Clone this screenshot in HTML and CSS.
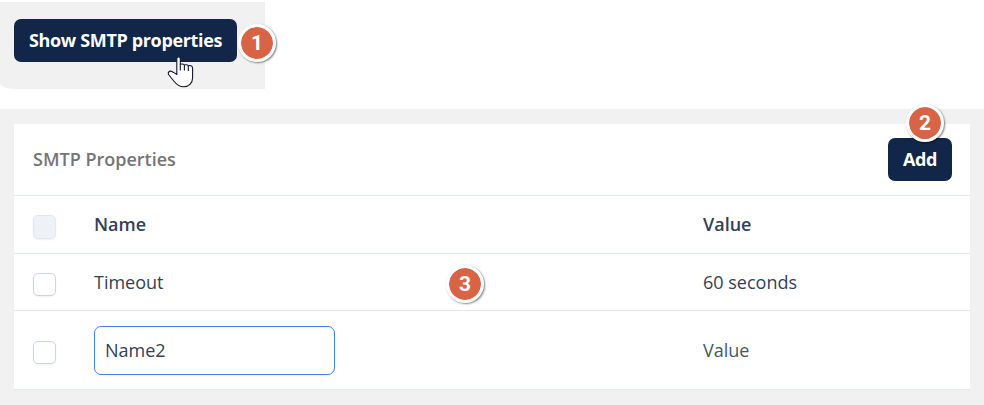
FILE: index.html
```html
<!DOCTYPE html>
<html lang="en">
<head>
    <meta charset="UTF-8">
    <meta name="viewport" content="width=device-width, initial-scale=1.0">
    <title>SMTP Properties</title>
    <link rel="stylesheet" href="styles.css">
</head>
<body>
    <div class="toolbar">
        <button class="btn btn-show" type="button">Show SMTP properties</button>
        <span class="step step-1">1</span>
        <svg class="cursor" width="27" height="34" viewBox="0 0 27 34">
            <path d="M9.8 19.5V3.5C9.8 1.3 13.3 1.3 13.3 3.5V9.5C13.9 8.8 16.9 8.8 17.4 10.2C18 9.4 20.9 9.6 21.3 11C22.5 10.2 25.6 10.4 25.6 13.2V23C25.6 28 21.6 31.8 16.5 31.8C12 31.8 9.2 29 6.8 26L1.5 19.5C.5 17.2 2.6 15.4 4.8 16.5C6.8 17.6 8.4 18.4 9.8 19.5Z" fill="#fff" stroke="#10152c" stroke-width="1.1" stroke-linejoin="round"/>
            <path d="M13.3 9.5V15.5M17.4 10.2V15.5M21.3 11V16" fill="none" stroke="#10152c" stroke-width="1.1"/>
        </svg>
    </div>

    <div class="content">
        <div class="card">
            <div class="card-header">
                <h2>SMTP Properties</h2>
                <div class="add">
                    <button class="btn btn-add" type="button">Add</button>
                    <span class="step step-2">2</span>
                </div>
            </div>
            <div class="row row-head">
                <span class="check disabled"></span>
                <span class="head-name">Name</span>
                <span class="head-value">Value</span>
            </div>
            <div class="row">
                <span class="check"></span>
                <span class="timeout">Timeout</span>
                <span class="seconds">60 seconds</span>
                <span class="step step-3">3</span>
            </div>
            <div class="row row-edit">
                <span class="check"></span>
                <input class="name-input" type="text" value="Name2">
                <span class="value">Value</span>
            </div>
        </div>
    </div>
</body>
</html>
```
FILE: styles.css
```css
* {
    box-sizing: border-box;
}
body {
    font-family: "Open Sans", "Noto Sans", sans-serif;
    font-size: 18px;
    line-height: 24px;
    color: #334155;
    background-color: #fff;
    margin: 0;
    padding-top: 2px;
    height: 405px;
    overflow: hidden;
}
.toolbar {
    position: relative;
    width: 265px;
    height: 87px;
    padding: 17px 14px;
    background-color: #f1f1f1;
    border-bottom-left-radius: 14px 6px;
}
.btn {
    display: block;
    height: 43px;
    padding: 0 0 2px;
    border: none;
    border-radius: 7px;
    background-color: #112648;
    color: #fff;
    font: inherit;
    font-weight: bold;
    letter-spacing: -0.35px;
    white-space: nowrap;
}
.btn-show {
    width: 223px;
}
.btn-add {
    width: 64px;
}
/* numbered callouts lie over the page */
.step {
    position: absolute;
    display: flex;
    align-items: center;
    justify-content: center;
    width: 38px;
    height: 38px;
    border: 3px solid #fff;
    border-radius: 50%;
    background-color: #d96445;
    background-clip: padding-box;
    box-shadow: 1px 1px 2px rgba(0, 0, 0, 0.5);
    color: #fff;
    font-family: Roboto, sans-serif;
    font-size: 21px;
    font-weight: bold;
}
.step-1 {
    left: 238px;
    top: 22px;
}
.step-2 {
    left: 18px;
    top: -34px;
}
.step-3 {
    left: 432px;
    top: 11px;
}
.cursor {
    position: absolute;
    left: 167px;
    top: 53px;
}
.content {
    margin-top: 20px;
    height: 296px;
    padding: 15px 14px;
    background-color: #f1f1f1;
}
.card {
    background-color: #fff;
}
.card-header {
    display: flex;
    align-items: center;
    justify-content: space-between;
    height: 72px;
    padding: 0 18px 0 19px;
    border-bottom: 1px solid #e2e8f0;
}
.card-header h2 {
    margin: 0;
    padding-bottom: 2px;
    font-size: 18px;
    font-weight: 600;
    color: #757575;
}
.add {
    position: relative;
}
.row {
    position: relative;
    display: grid;
    grid-template-columns: 61px 609px 1fr;
    align-items: center;
    height: 57px;
    padding-left: 19px;
    border-bottom: 1px solid #e2e8f0;
}
.row-head {
    height: 58px;
    font-weight: 600;
}
.head-name,
.head-value {
    padding-bottom: 2px;
}
.row-edit {
    height: 79px;
}
.check {
    width: 23px;
    height: 23px;
    margin-top: 4px;
    border: 1px solid #cbd5e1;
    border-radius: 5px;
    background-color: #fff;
    box-shadow: 0 1px 2px rgba(0, 0, 0, 0.06);
}
.check.disabled {
    height: 24px;
    border-color: #e2e8f0;
    background-color: #eef2f7;
}
.name-input {
    width: 241px;
    height: 49px;
    padding: 0 10px;
    border: 1px solid #3b82f6;
    border-radius: 7px;
    background-color: #fff;
    color: #334155;
    font: inherit;
    outline: none;
}
.value {
    color: #475569;
}
```
